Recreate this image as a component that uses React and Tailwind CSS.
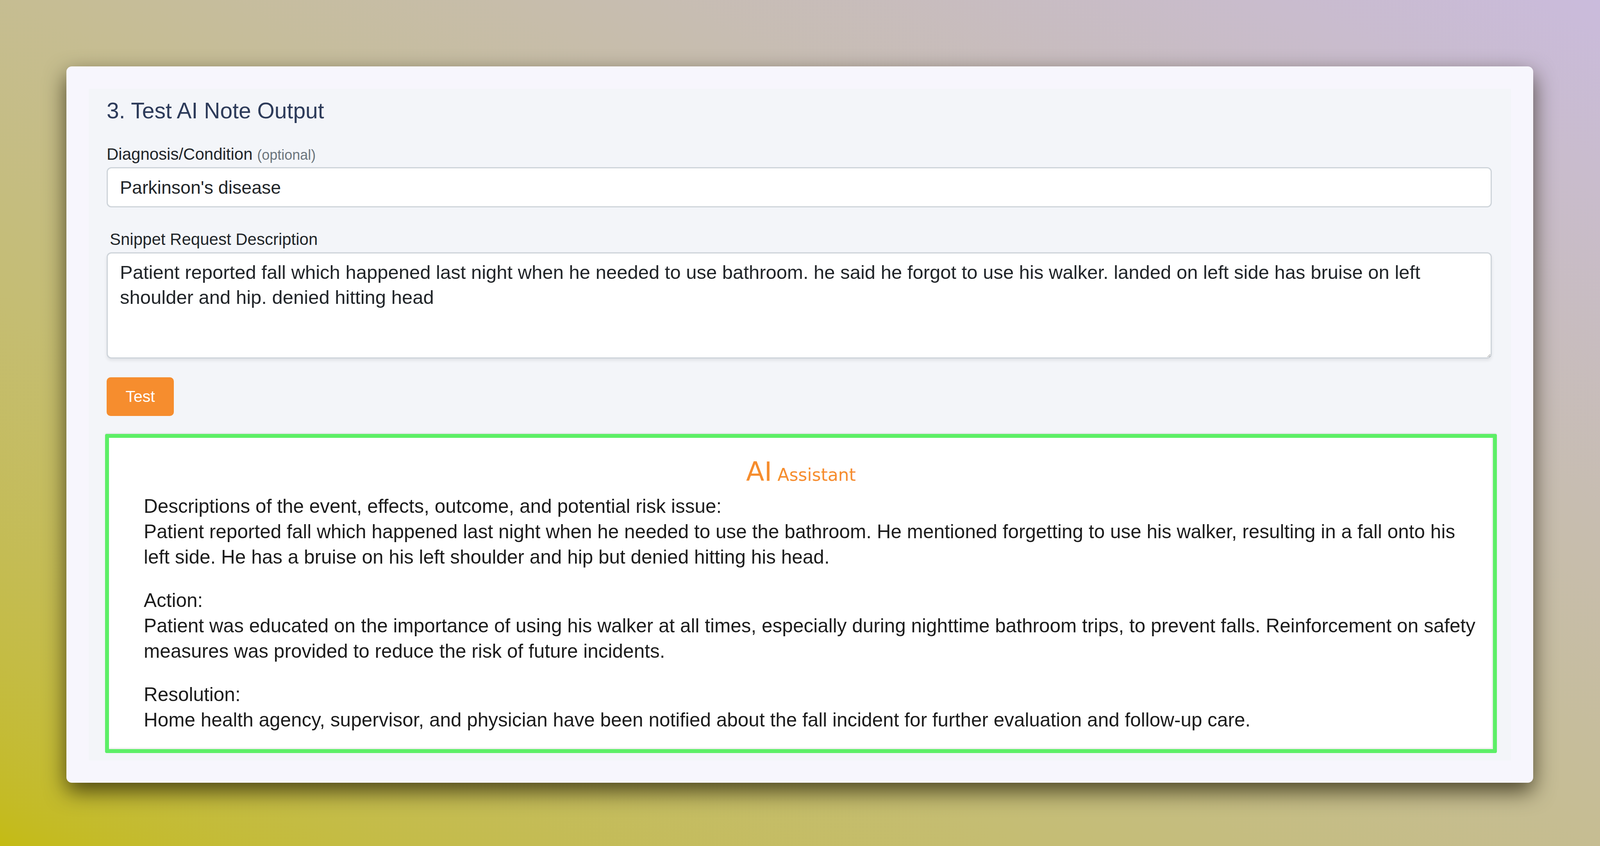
import React from "react";

const sans = { fontFamily: '"Liberation Sans", Arial, Helvetica, sans-serif' };
const verdanaLike = { fontFamily: '"DejaVu Sans", Verdana, sans-serif' };

const notes = [
  {
    heading: "Descriptions of the event, effects, outcome, and potential risk issue:",
    body: "Patient reported fall which happened last night when he needed to use the bathroom. He mentioned forgetting to use his walker, resulting in a fall onto his left side. He has a bruise on his left shoulder and hip but denied hitting his head.",
  },
  {
    heading: "Action:",
    body: "Patient was educated on the importance of using his walker at all times, especially during nighttime bathroom trips, to prevent falls. Reinforcement on safety measures was provided to reduce the risk of future incidents.",
  },
  {
    heading: "Resolution:",
    body: "Home health agency, supervisor, and physician have been notified about the fall incident for further evaluation and follow-up care.",
  },
];

const App = () => {
  return (
    <div
      className="w-full min-h-[2166px] overflow-hidden bg-linear-to-tr from-[#c4bb10] to-[#cabbdc] pt-[170px] pl-[170px] pr-[171px] pb-[170px]"
      style={sans}
    >
      {/* Card */}
      <div className="w-full rounded-[14px] bg-[#f7f6fd] p-[57px] shadow-[0_22px_55px_rgba(25,20,0,0.7)]">
        <div className="bg-[#f3f5f9] pt-[23px] pl-[46px] pr-[49px] pb-[19px]">
          <h3 className="text-[57px] leading-[67px] text-[#2d3b5a] font-normal">3. Test AI Note Output</h3>

          {/* Diagnosis */}
          <label className="block mt-[53px] text-[42px] leading-[49px] text-[#212529]">
            Diagnosis/Condition <span className="text-[36px] text-[#6c757d]">(optional)</span>
          </label>
          <input
            type="text"
            defaultValue="Parkinson's disease"
            className="mt-[7px] block w-full h-[103px] bg-white border-[3px] border-[#ced4da] rounded-[12px] px-[31px] text-[46.5px] text-[#212529] outline-none"
            style={sans}
          />

          {/* Snippet */}
          <label className="block mt-[57px] ml-[8px] text-[42px] leading-[49px] text-[#212529]">
            Snippet Request Description
          </label>
          <textarea
            defaultValue="Patient reported fall which happened last night when he needed to use bathroom. he said he forgot to use his walker. landed on left side has bruise on left shoulder and hip. denied hitting head"
            className="mt-[9px] block w-full h-[272px] bg-white border-[3px] border-[#ced4da] rounded-[12px] pt-[16px] pl-[31px] pr-[33px] text-[49px] leading-[64px] text-[#212529] outline-none shadow-[0_5px_8px_rgba(0,0,0,0.08)]"
            style={sans}
          />

          <button
            className="mt-[48px] block w-[172px] h-[99px] rounded-[10px] bg-[#f68d2e] text-white text-[41px]"
            style={sans}
          >
            Test
          </button>

          {/* AI output */}
          <div className="mt-[46px] -ml-[4px] -mr-[13px] border-[10px] border-[#5cef66] rounded-[4px] bg-white shadow-[inset_-3px_-3px_3px_rgba(0,0,0,0.08),0_-2px_3px_rgba(0,0,0,0.08)]">
            <div className="pt-[45px] text-center text-[44px] leading-[84px] text-[#f68d2e]" style={verdanaLike}>
              <span className="text-[68px]">AI</span> <span>Assistant</span>
            </div>
            <div className="mt-[5px] pl-[89px] pr-[20px] pb-[43px] text-[49.5px] leading-[65px] text-[#1c1c1c]">
              {notes.map((n, i) => (
                <p key={n.heading} className={i < notes.length - 1 ? "mb-[46px]" : ""}>
                  {n.heading}
                  <br />
                  {n.body}
                </p>
              ))}
            </div>
          </div>
        </div>
      </div>
    </div>
  );
};

export default App;
